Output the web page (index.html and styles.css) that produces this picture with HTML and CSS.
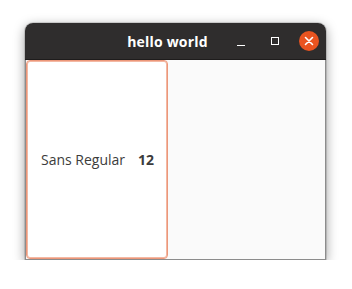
FILE: index.html
```html
<!DOCTYPE html>
<html lang="en">
<head>
  <meta charset="UTF-8">
  <title>hello world</title>
  <link rel="stylesheet" href="styles.css">
</head>
<body>
  <div class="window">
    <div class="titlebar">
      <span class="title">hello world</span>
      <div class="controls">
        <span class="ctl ctl-min"></span>
        <span class="ctl ctl-max"></span>
        <span class="ctl ctl-close">
          <svg width="10" height="10" viewBox="0 0 10 10">
            <path d="M1.5 1.5 L8.5 8.5 M8.5 1.5 L1.5 8.5" stroke="#fff" stroke-width="1.6" stroke-linecap="round"/>
          </svg>
        </span>
      </div>
    </div>
    <div class="content">
      <button class="font-button">
        <span class="font-name">Sans Regular</span>
        <span class="font-size">12</span>
      </button>
    </div>
  </div>
</body>
</html>
```

FILE: styles.css
```css
body {
  margin: 0;
  padding: 23px 0 0 25px;
  background: #fff;
  font-family: 'Open Sans', 'Noto Sans', sans-serif;
}
.window {
  width: 301px;
  height: 237px;
  border-radius: 8px 8px 0 0;
  box-shadow: 0 3px 12px rgba(0, 0, 0, 0.4), 0 0 0 1px rgba(0, 0, 0, 0.12);
  display: flex;
  flex-direction: column;
  overflow: hidden;
}
.titlebar {
  height: 36px;
  background: #2f2d2d;
  border-bottom: 1px solid #1e1c1c;
  position: relative;
  display: flex;
  align-items: center;
  justify-content: flex-end;
}
.title {
  position: absolute;
  left: 0;
  right: 0;
  text-align: center;
  padding-right: 16px;
  color: #fff;
  font-weight: bold;
  font-size: 14px;
  letter-spacing: 0.2px;
}
.controls {
  display: flex;
  align-items: center;
  gap: 14px;
  padding-right: 7px;
  position: relative;
}
.ctl {
  width: 20px;
  height: 20px;
  display: flex;
  align-items: center;
  justify-content: center;
}
.ctl-min::before {
  content: '';
  width: 8px;
  height: 1px;
  margin-top: 8px;
  background: #fff;
}
.ctl-max::before {
  content: '';
  width: 6px;
  height: 6px;
  border: 1px solid #fff;
}
.ctl-close {
  border-radius: 50%;
  background: #e95420;
}
.content {
  flex: 1;
  background: #fafafa;
  border-left: 1px solid #8c8c8c;
  border-right: 1px solid #8c8c8c;
  border-bottom: 1px solid #8c8c8c;
  display: flex;
}
.font-button {
  width: 142px;
  margin: 0;
  background: #fff;
  border: 1px solid #ec977a;
  border-radius: 4px;
  box-shadow: inset 0 0 0 1px #f3b8a3;
  display: flex;
  align-items: center;
  padding: 0 0 1px 14px;
  gap: 13px;
  font-family: 'Open Sans', 'Noto Sans', sans-serif;
  font-size: 14px;
  color: #3c3c3c;
  cursor: pointer;
}
.font-size {
  font-weight: bold;
}
```
